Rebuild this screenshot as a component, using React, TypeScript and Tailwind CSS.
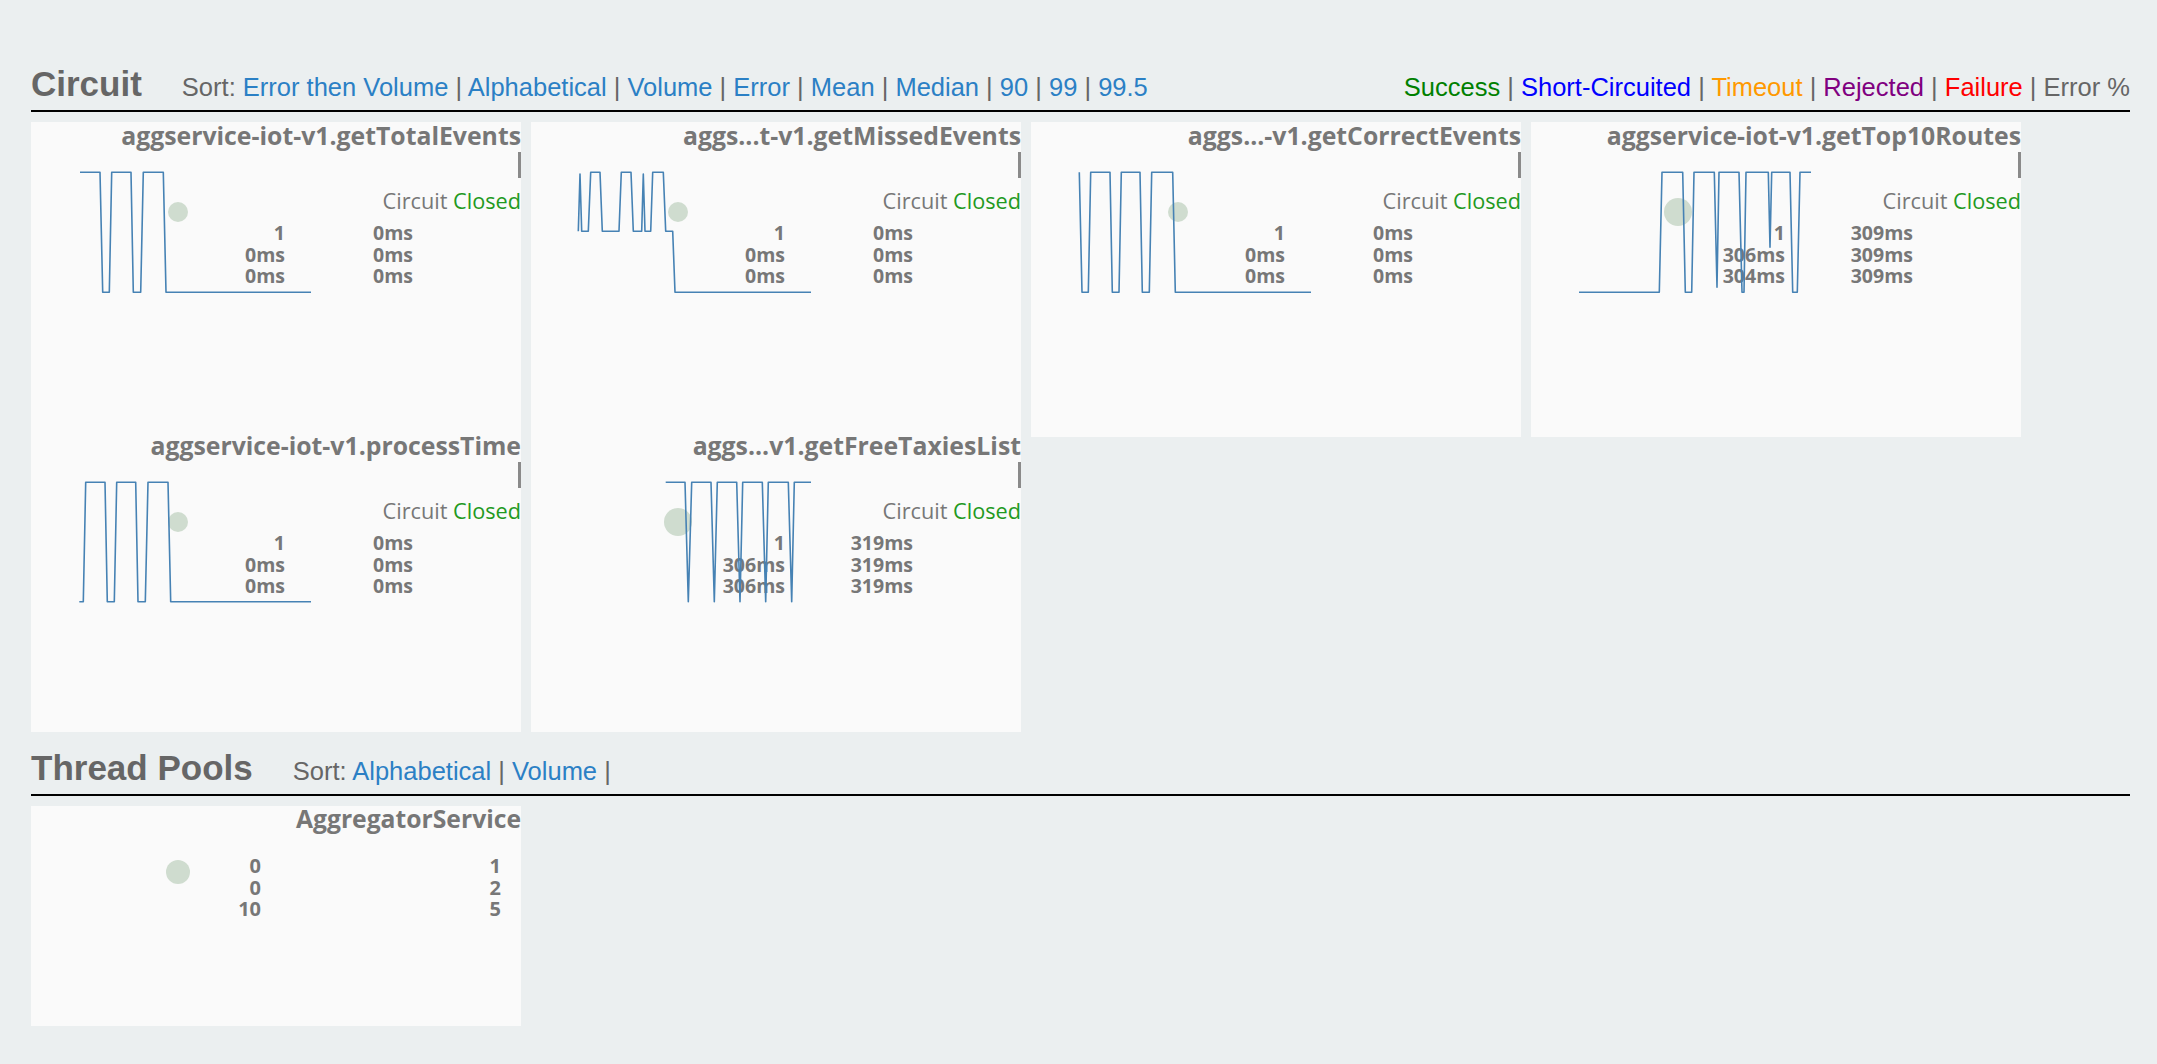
import React from 'react';

type Circuit = {
  name: string;
  rows: [string, string][];
  path: string;
  r: number;
  tall?: boolean;
};

const zeros: [string, string][] = [
  ['1', '0ms'],
  ['0ms', '0ms'],
  ['0ms', '0ms'],
];

const circuits: Circuit[] = [
  {
    name: 'aggservice-iot-v1.getTotalEvents',
    rows: zeros,
    r: 10,
    path: 'M49,50.3 H69 L71.7,170.3 H78.3 L80.7,50.3 H100 L102.3,170.3 H109.7 L112.3,50.3 H132.3 L135,170.3 H280',
  },
  {
    name: 'aggs...t-v1.getMissedEvents',
    rows: zeros,
    r: 10,
    path: 'M47.3,109.3 L49,52 L50.7,109.3 H57.3 L59.7,50.3 H69 L71.3,109.3 H88 L90.3,50.3 H100 L102.3,109.3 H110.7 L112.3,52 L114,109.3 H119.7 L121.7,50.3 H132.3 L134.7,109.3 H141.7 L144,170.3 H280',
  },
  {
    name: 'aggs...-v1.getCorrectEvents',
    rows: zeros,
    r: 10,
    tall: true,
    path: 'M48.3,50.3 L51,170.3 H57.3 L59.7,50.3 H79 L81.3,170.3 H88 L90.3,50.3 H109 L111.3,170.3 H118.3 L120.7,50.3 H141.7 L144.3,170.3 H280',
  },
  {
    name: 'aggservice-iot-v1.getTop10Routes',
    rows: [
      ['1', '309ms'],
      ['306ms', '309ms'],
      ['304ms', '309ms'],
    ],
    r: 14,
    tall: true,
    path: 'M48,170.3 H128.3 L131,50.3 H151.7 L154.3,170.3 H160.7 L163,50.3 H183.3 L186,165.3 L188,50.3 H208 L211,170.3 H213 L215,50.3 H237.3 L239,125.3 L240.7,50.3 H259 L261.7,170.3 H266.3 L269,50.3 H280',
  },
  {
    name: 'aggservice-iot-v1.processTime',
    rows: zeros,
    r: 10,
    path: 'M48.3,169.7 H52.3 L54.7,50.3 H74 L76.3,169.7 H83.3 L85.7,50.3 H104.7 L107,169.7 H114.3 L117,50.3 H137 L139.7,169.7 H280',
  },
  {
    name: 'aggs...v1.getFreeTaxiesList',
    rows: [
      ['1', '319ms'],
      ['306ms', '319ms'],
      ['306ms', '319ms'],
    ],
    r: 14,
    path: 'M134.7,50.3 H154 L157.3,169.7 L160.7,50.3 H180 L183.3,169.7 L186.3,50.3 H205.7 L209,169.7 L211.7,50.3 H231.3 L234.7,169.7 L237.3,50.3 H257.3 L260.7,169.7 L263.3,50.3 H280',
  },
];

function Sep() {
  return <span className="text-[#666]">{' | '}</span>;
}

function SectionHeader({ title, sorts }: { title: string; sorts: string[] }) {
  return (
    <div className="flex items-baseline border-b-2 border-black pb-[7px] font-['Liberation_Sans',Arial,sans-serif]">
      <h2 className="mr-[40px] text-[35px] font-bold leading-[38px] text-[#666]">{title}</h2>
      <div className="whitespace-pre text-[25.5px] leading-[30px] text-[#666]">
        Sort:{' '}
        {sorts.map((s, i) => (
          <React.Fragment key={s}>
            <span className="text-[#2b80c5]">{s}</span>
            {i < sorts.length - 1 || title === 'Thread Pools' ? <Sep /> : null}
          </React.Fragment>
        ))}
      </div>
      {title === 'Circuit' && (
        <div className="ml-auto whitespace-pre text-[25.5px] leading-[30px]">
          <span className="text-[#008000]">Success</span>
          <Sep />
          <span className="text-[#0000ff]">Short-Circuited</span>
          <Sep />
          <span className="text-[#ff9900]">Timeout</span>
          <Sep />
          <span className="text-[#800080]">Rejected</span>
          <Sep />
          <span className="text-[#ff0000]">Failure</span>
          <Sep />
          <span className="text-[#666]">Error %</span>
        </div>
      )}
    </div>
  );
}

function CircuitCard({ c }: { c: Circuit }) {
  return (
    <div
      className={`relative bg-[#fafafa] font-['Open_Sans',sans-serif] text-[#777] ${
        c.tall ? 'h-[315px] self-start' : ''
      }`}
    >
      <div className="flex flex-col items-end">
        <div className="whitespace-nowrap text-[24.8px] font-bold leading-[26px]">{c.name}</div>
        <div className="mt-[4px] h-[26px] w-[3px] bg-[#8a8a8a]" />
        <div className="mt-[11px] whitespace-nowrap text-[21.7px] leading-[24px] text-[#777]">
          Circuit <span className="text-[#229922]">Closed</span>
        </div>
      </div>
      <div className="mt-[9px] flex flex-col text-[19.5px] font-bold leading-[21.5px]">
        {c.rows.map(([a, b], i) => (
          <div key={i} className="flex">
            <span className="w-[254px] text-right">{a}</span>
            <span className="w-[128px] text-right">{b}</span>
          </div>
        ))}
      </div>
      {/* sparkline + health bubble sit on top of the numbers */}
      <svg className="pointer-events-none absolute left-0 top-0" width="490" height="200">
        <circle cx="147" cy="90" r={c.r} fill="#cfdccf" />
        <path d={c.path} fill="none" stroke="#4682b4" strokeWidth="1.6" strokeLinejoin="round" />
      </svg>
    </div>
  );
}

function PoolCard() {
  const rows: [string, string][] = [
    ['0', '1'],
    ['0', '2'],
    ['10', '5'],
  ];
  return (
    <div className="relative h-[220px] bg-[#fafafa] font-['Open_Sans',sans-serif] text-[#777]">
      <div className="flex justify-end">
        <div className="whitespace-nowrap text-[24.7px] font-bold leading-[26px]">AggregatorService</div>
      </div>
      <div className="mt-[23px] flex flex-col text-[20px] font-bold leading-[21.5px]">
        {rows.map(([a, b], i) => (
          <div key={i} className="flex">
            <span className="w-[230px] text-right">{a}</span>
            <span className="w-[240px] text-right">{b}</span>
          </div>
        ))}
      </div>
      <svg className="pointer-events-none absolute left-0 top-0" width="300" height="120">
        <circle cx="147" cy="66" r="12" fill="#cfdccf" />
      </svg>
    </div>
  );
}

export default function App() {
  return (
    <main className="min-h-screen bg-[#ebeff0] pl-[31px] pr-[27px] pt-[65px]">
      <SectionHeader
        title="Circuit"
        sorts={['Error then Volume', 'Alphabetical', 'Volume', 'Error', 'Mean', 'Median', '90', '99', '99.5']}
      />
      <div className="mt-[10px] grid grid-cols-[repeat(4,490px)] grid-rows-[310px_300px] gap-x-[10px]">
        {circuits.map((c) => (
          <CircuitCard key={c.name} c={c} />
        ))}
      </div>

      <div className="mt-[17px]">
        <SectionHeader title="Thread Pools" sorts={['Alphabetical', 'Volume']} />
      </div>
      <div className="mt-[10px] grid grid-cols-[repeat(4,490px)] gap-x-[10px] pb-[38px]">
        <PoolCard />
      </div>
    </main>
  );
}
